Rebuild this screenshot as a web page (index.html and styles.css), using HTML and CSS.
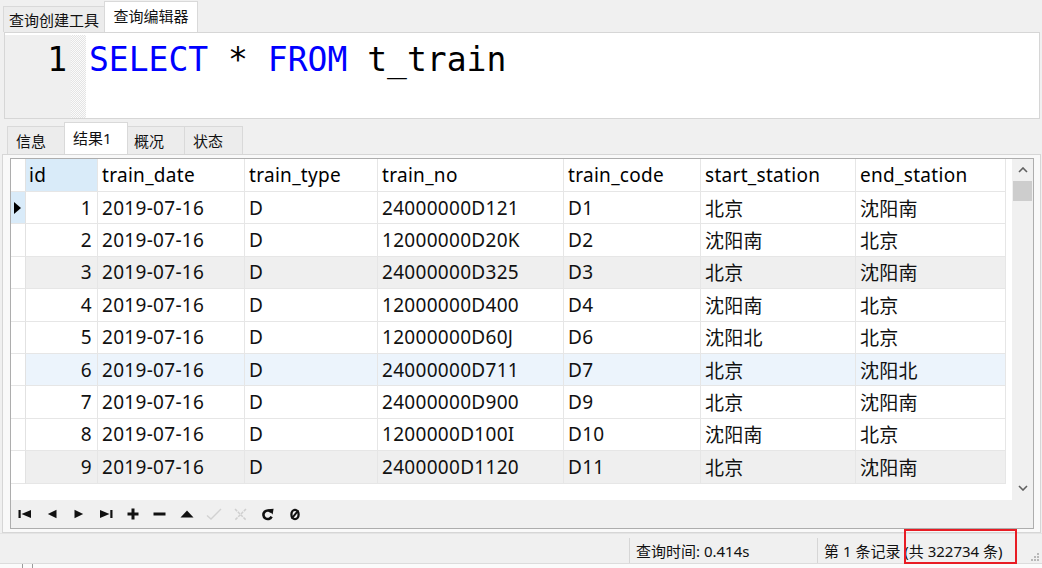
FILE: index.html
```html
<!DOCTYPE html>
<html lang="zh-CN">
<head>
<meta charset="utf-8">
<title>查询编辑器</title>
<link rel="stylesheet" href="styles.css">
</head>
<body>
<div class="app">
  <div class="doc-tabs">
    <div class="doc-tab">查询创建工具</div>
    <div class="doc-tab active">查询编辑器</div>
  </div>

  <div class="editor">
    <div class="gutter"><span class="ln">1</span></div>
    <div class="fold"></div>
    <div class="code"><span class="kw">SELECT</span> * <span class="kw">FROM</span> t_train</div>
  </div>

  <div class="res-tabs">
    <div class="rtab">信息</div>
    <div class="rtab active">结果1</div>
    <div class="rtab">概况</div>
    <div class="rtab">状态</div>
  </div>

  <div class="res-frame">
    <div class="grid-box">
      <div class="grid-area">
        <div class="table">
          <div class="row head">
            <div class="c ind"></div>
            <div class="c sel">id</div>
            <div class="c">train_date</div>
            <div class="c">train_type</div>
            <div class="c">train_no</div>
            <div class="c">train_code</div>
            <div class="c">start_station</div>
            <div class="c">end_station</div>
          </div>
          <div class="row">
            <div class="c ind cur"><span class="arrow"></span></div>
            <div class="c num">1</div><div class="c">2019-07-16</div><div class="c">D</div><div class="c">24000000D121</div><div class="c">D1</div><div class="c">北京</div><div class="c">沈阳南</div>
          </div>
          <div class="row">
            <div class="c ind"></div>
            <div class="c num">2</div><div class="c">2019-07-16</div><div class="c">D</div><div class="c">12000000D20K</div><div class="c">D2</div><div class="c">沈阳南</div><div class="c">北京</div>
          </div>
          <div class="row gray">
            <div class="c ind"></div>
            <div class="c num">3</div><div class="c">2019-07-16</div><div class="c">D</div><div class="c">24000000D325</div><div class="c">D3</div><div class="c">北京</div><div class="c">沈阳南</div>
          </div>
          <div class="row">
            <div class="c ind"></div>
            <div class="c num">4</div><div class="c">2019-07-16</div><div class="c">D</div><div class="c">12000000D400</div><div class="c">D4</div><div class="c">沈阳南</div><div class="c">北京</div>
          </div>
          <div class="row">
            <div class="c ind"></div>
            <div class="c num">5</div><div class="c">2019-07-16</div><div class="c">D</div><div class="c">12000000D60J</div><div class="c">D6</div><div class="c">沈阳北</div><div class="c">北京</div>
          </div>
          <div class="row hover">
            <div class="c ind"></div>
            <div class="c num">6</div><div class="c">2019-07-16</div><div class="c">D</div><div class="c">24000000D711</div><div class="c">D7</div><div class="c">北京</div><div class="c">沈阳北</div>
          </div>
          <div class="row">
            <div class="c ind"></div>
            <div class="c num">7</div><div class="c">2019-07-16</div><div class="c">D</div><div class="c">24000000D900</div><div class="c">D9</div><div class="c">北京</div><div class="c">沈阳南</div>
          </div>
          <div class="row">
            <div class="c ind"></div>
            <div class="c num">8</div><div class="c">2019-07-16</div><div class="c">D</div><div class="c">1200000D100I</div><div class="c">D10</div><div class="c">沈阳南</div><div class="c">北京</div>
          </div>
          <div class="row gray">
            <div class="c ind"></div>
            <div class="c num">9</div><div class="c">2019-07-16</div><div class="c">D</div><div class="c">2400000D1120</div><div class="c">D11</div><div class="c">北京</div><div class="c">沈阳南</div>
          </div>
        </div>
        <div class="vscroll">
          <div class="sb-btn"><svg width="10" height="6" viewBox="0 0 10 6"><polyline points="1,5 5,1 9,5" fill="none" stroke="#606060" stroke-width="1.6"/></svg></div>
          <div class="sb-thumb"></div>
          <div class="sb-track"></div>
          <div class="sb-btn"><svg width="10" height="6" viewBox="0 0 10 6"><polyline points="1,1 5,5 9,1" fill="none" stroke="#606060" stroke-width="1.6"/></svg></div>
        </div>
      </div>
      <div class="toolbar">
        <div class="tb"><svg width="14" height="10" viewBox="0 0 14 10"><rect x="0.5" y="1" width="2.2" height="8" fill="#111"/><polygon points="13,1 13,9 3.5,5" fill="#111"/></svg></div>
        <div class="tb"><svg width="10" height="10" viewBox="0 0 10 10"><polygon points="9.5,0.8 9.5,9.2 0.8,5" fill="#111"/></svg></div>
        <div class="tb"><svg width="10" height="10" viewBox="0 0 10 10"><polygon points="0.5,0.8 0.5,9.2 9.2,5" fill="#111"/></svg></div>
        <div class="tb"><svg width="14" height="10" viewBox="0 0 14 10"><polygon points="1,1 1,9 10.5,5" fill="#111"/><rect x="11.3" y="1" width="2.2" height="8" fill="#111"/></svg></div>
        <div class="tb"><svg width="12" height="12" viewBox="0 0 12 12"><rect x="4.5" y="0.5" width="3" height="11" fill="#111"/><rect x="0.5" y="4.5" width="11" height="3" fill="#111"/></svg></div>
        <div class="tb"><svg width="13" height="12" viewBox="0 0 13 12"><rect x="0.5" y="4.5" width="12" height="3" fill="#111"/></svg></div>
        <div class="tb"><svg width="14" height="10" viewBox="0 0 14 10"><polygon points="0.5,8.5 13.5,8.5 7,1.5" fill="#111"/></svg></div>
        <div class="tb"><svg width="18" height="14" viewBox="0 0 18 14"><polyline points="2,8.5 6,12 16,2" fill="none" stroke="#d2d2d2" stroke-width="1.4"/></svg></div>
        <div class="tb"><svg width="15" height="15" viewBox="0 0 15 15"><line x1="2" y1="2" x2="13" y2="13" stroke="#cfcfcf" stroke-width="1.5" stroke-dasharray="3 1"/><line x1="13" y1="2" x2="2" y2="13" stroke="#cfcfcf" stroke-width="1.5" stroke-dasharray="3 1"/></svg></div>
        <div class="tb"><svg width="13" height="13" viewBox="0 0 13 13"><path d="M10.2 4.2 A4.3 4.3 0 1 0 10.6 8.6" fill="none" stroke="#111" stroke-width="2.6"/><polygon points="6.8,1.2 12.6,0.8 11.6,6.4" fill="#111"/></svg></div>
        <div class="tb"><svg width="12" height="13" viewBox="0 0 12 13"><ellipse cx="6" cy="6.5" rx="3.6" ry="4.6" fill="none" stroke="#111" stroke-width="2.3"/><line x1="2.6" y1="10.6" x2="9.4" y2="2.4" stroke="#111" stroke-width="2"/></svg></div>
      </div>
    </div>
  </div>

  <div class="status">
    <div class="st-fill"></div>
    <div class="st-seg st-time">查询时间: 0.414s</div>
    <div class="st-seg st-rec">第 1 条记录 (共 322734 条)</div>
    <div class="st-grip">
      <svg width="10" height="10" viewBox="0 0 10 10"><g fill="#b8b8b8"><rect x="7" y="1" width="2" height="2"/><rect x="4" y="4" width="2" height="2"/><rect x="7" y="4" width="2" height="2"/><rect x="1" y="7" width="2" height="2"/><rect x="4" y="7" width="2" height="2"/><rect x="7" y="7" width="2" height="2"/></g></svg>
    </div>
    <div class="highlight"></div>
  </div>
  <div class="bottom-strip"><span class="tick"></span><span class="tick"></span></div>
</div>
</body>
</html>
```
FILE: styles.css
```css
html, body {
  margin: 0;
  padding: 0;
}
body {
  width: 1042px;
  height: 568px;
  overflow: hidden;
  background: #f0f0f0;
  font-family: "Noto Sans", "Noto Sans CJK SC", sans-serif;
  color: #111;
}
.app {
  display: flex;
  flex-direction: column;
  height: 568px;
}

/* top document tabs */
.doc-tabs {
  height: 32px;
  display: flex;
  align-items: flex-end;
  padding-left: 3px;
  box-sizing: border-box;
  flex: none;
}
.doc-tab {
  height: 26px;
  width: 102px;
  box-sizing: border-box;
  border: 1px solid #d9d9d9;
  border-bottom: none;
  background: #ececec;
  font-size: 15px;
  display: flex;
  align-items: center;
  justify-content: center;
  color: #111;
}
.doc-tab.active {
  height: 31px;
  width: 94px;
  background: #fff;
  margin-left: -1px;
  align-items: flex-start;
  padding-top: 3px;
}

/* editor */
.editor {
  flex: none;
  height: 87px;
  margin: 0 2px 0 4px;
  border: 1px solid #d6d6d6;
  box-sizing: border-box;
  background: #fff;
  display: flex;
  padding-top: 2px;
}
.gutter {
  width: 66px;
  background: #efefef;
  box-sizing: border-box;
  padding: 5px 4px 0 0;
  text-align: right;
}
.ln, .code {
  font-family: "DejaVu Sans Mono", "Liberation Mono", monospace;
  font-size: 33px;
  line-height: 40px;
  color: #000;
}
.fold {
  width: 15px;
  background: repeating-conic-gradient(#e4e4e4 0 25%, #fbfbfb 0 50%) 0 0 / 2px 2px;
}
.code {
  flex: 1;
  padding: 5px 0 0 3px;
  white-space: pre;
}
.kw {
  color: #0000ff;
}

/* result tabs */
.res-tabs {
  flex: none;
  height: 35px;
  display: flex;
  align-items: flex-end;
  padding-left: 7px;
  box-sizing: border-box;
}
.rtab {
  height: 28px;
  width: 58px;
  box-sizing: border-box;
  border: 1px solid #d9d9d9;
  border-bottom: none;
  margin-right: -1px;
  background: #ececec;
  font-size: 15px;
  display: flex;
  align-items: center;
  padding-left: 8px;
  color: #111;
}
.rtab.active {
  height: 32px;
  width: 64px;
  background: #fff;
  align-items: flex-start;
  padding-top: 4px;
  position: relative;
}
.rtab:nth-child(3) { width: 58px; padding-left: 6px; }
.rtab:nth-child(4) { width: 59px; }

/* result frame + grid */
.res-frame {
  flex: none;
  height: 379px;
  margin: 0 1px 0 2px;
  border: 1px solid #d6d6d6;
  box-sizing: border-box;
  padding: 3px 6px 3px 7px;
  background: #f9f9f9;
}
.grid-box {
  height: 371px;
  box-sizing: border-box;
  border: 1px solid #adadad;
  background: #fff;
  display: flex;
  flex-direction: column;
}
.grid-area {
  height: 341px;
  display: flex;
}
.table {
  flex: 1;
}
.row {
  display: grid;
  grid-template-columns: 15px 72px 147px 133px 186px 137px 155px 150px;
  height: 32.4px;
  font-size: 19px;
  letter-spacing: 0.3px;
  color: #111;
}
.row.head {
  height: 33px;
  color: #000;
}
.c {
  box-sizing: border-box;
  border-right: 1px solid #e6e6e6;
  border-bottom: 1px solid #e6e6e6;
  padding: 0 3px 0 4px;
  display: flex;
  align-items: center;
  white-space: nowrap;
  overflow: hidden;
}
.c.ind {
  padding: 0;
  background: #fff;
  border-right-color: #e2e2e2;
}
.c.num {
  justify-content: flex-end;
  padding-right: 5px;
}
.c.sel {
  background: #d9ebf9;
  padding-left: 3px;
}
.c.ind.cur {
  background: #d9ebf9;
}
.arrow {
  width: 0;
  height: 0;
  border-top: 6px solid transparent;
  border-bottom: 6px solid transparent;
  border-left: 7px solid #000;
  margin-left: 3px;
}
.row.gray .c:not(.ind) {
  background: #efefef;
}
.row.hover .c:not(.ind) {
  background: #ecf4fc;
}
.vscroll {
  width: 21px;
  margin-left: 6px;
  background: #f0f0f0;
  display: flex;
  flex-direction: column;
}
.sb-btn {
  height: 22px;
  display: flex;
  align-items: center;
  justify-content: center;
}
.sb-thumb {
  height: 20px;
  margin: 0 1px;
  background: #cdcdcd;
}
.sb-track {
  flex: 1;
}
.vscroll .sb-btn:last-child {
  height: 20px;
  margin-bottom: 2px;
}

/* toolbar */
.toolbar {
  height: 28px;
  background: #f0f0f0;
  display: flex;
  align-items: center;
}
.tb {
  width: 27px;
  height: 28px;
  display: flex;
  align-items: center;
  justify-content: center;
}

/* status bar */
.status {
  flex: none;
  height: 30px;
  position: relative;
  display: flex;
  align-items: stretch;
  font-size: 15px;
  color: #111;
  padding-top: 4px;
  box-sizing: border-box;
  border-top: 1px solid #e4e4e4;
}
.st-fill {
  width: 629px;
}
.st-seg {
  border-left: 1px solid #d6d6d6;
  display: flex;
  align-items: center;
  padding-left: 6px;
  box-sizing: border-box;
  white-space: nowrap;
}
.st-time {
  width: 188px;
}
.st-rec {
  width: 211px;
}
.st-grip {
  flex: 1;
  display: flex;
  align-items: flex-end;
  justify-content: flex-end;
  padding: 0 2px 1px 0;
}
.highlight {
  position: absolute;
  left: 904px;
  top: -5px;
  width: 113px;
  height: 35px;
  box-sizing: border-box;
  border: 2px solid #e81c24;
}
.bottom-strip {
  flex: 1;
  background: #fbfbfb;
  border-top: 1px solid #dcdcdc;
  display: flex;
  padding-left: 22px;
  gap: 9px;
}
.tick {
  width: 1px;
  background: #9a9a9a;
}
```
